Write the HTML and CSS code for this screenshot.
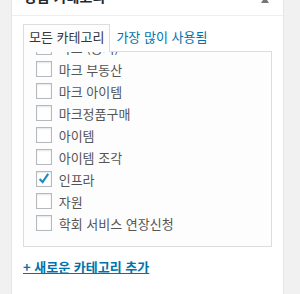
FILE: index.html
```html
<!DOCTYPE html>
<html lang="ko">
<head>
    <meta charset="UTF-8">
    <meta name="viewport" content="width=device-width, initial-scale=1.0">
    <title>상품 카테고리</title>
    <link rel="stylesheet" href="styles.css">
</head>
<body>
    <div id="product-cat" class="postbox">
        <div class="postbox-header">
            <h2 class="hndle">상품 카테고리</h2>
            <button class="handlediv" type="button" aria-label="토글">
                <svg width="20" height="20" viewBox="0 0 20 20"><path d="M6 13l4-6 4 6z" fill="#72777c"/></svg>
            </button>
        </div>
        <div class="inside">
            <ul class="category-tabs">
                <li class="tab active">모든 카테고리</li>
                <li class="tab"><a href="#">가장 많이 사용됨</a></li>
            </ul>

            <div class="tabs-panel">
                <ul class="categorychecklist">
                    <li><span class="check"></span>마크 (공지)</li>
                    <li><span class="check"></span>마크 부동산</li>
                    <li><span class="check"></span>마크 아이템</li>
                    <li><span class="check"></span>마크정품구매</li>
                    <li><span class="check"></span>아이템</li>
                    <li><span class="check"></span>아이템 조각</li>
                    <li><span class="check checked"><svg width="16" height="16" viewBox="0 0 16 16"><path d="M3.6 7.9l3 3.1 5.6-8.2" fill="none" stroke="#1e8cbe" stroke-width="2.1"/></svg></span>인프라</li>
                    <li><span class="check"></span>자원</li>
                    <li><span class="check"></span>학회 서비스 연장신청</li>
                </ul>
            </div>

            <a href="#" class="add-new">+ 새로운 카테고리 추가</a>
        </div>
    </div>
</body>
</html>
```

FILE: styles.css
```css
body {
    margin: 0;
    padding: 0;
    background-color: #f1f1f1;
    font-family: "Noto Sans CJK KR", "Noto Sans", sans-serif;
    font-size: 13px;
    color: #444;
}

.postbox {
    width: 271px;
    height: 320px;
    margin: -22px 0 0 11px;
    background: #fff;
    border: 1px solid #e5e5e5;
}

.postbox-header {
    display: flex;
    align-items: center;
    border-bottom: 1px solid #eee;
}

.hndle {
    flex: 1;
    margin: 0;
    padding: 8px 12px;
    font-size: 14px;
    line-height: 1.4;
    font-weight: 600;
    color: #23282d;
}

.handlediv {
    width: 36px;
    height: 36px;
    padding: 0;
    border: none;
    background: none;
    display: flex;
    justify-content: center;
    align-items: center;
}

.handlediv svg {
    margin-top: 5px;
}

.inside {
    padding: 8px 11px 0;
}

.category-tabs {
    display: flex;
    margin: 0;
    padding: 0;
    list-style: none;
}

.tab {
    padding: 3px 5px 5px;
    line-height: 18px;
    color: #32373c;
    border: 1px solid transparent;
    border-bottom: none;
}

.tab.active {
    border-color: #ddd;
    background: #fdfdfd;
    position: relative;
    z-index: 1;
    margin-bottom: -1px;
}

.tab a {
    color: #0073aa;
    text-decoration: none;
}

.tabs-panel {
    height: 194px;
    overflow: hidden;
    padding: 0 11.7px;
    border: 1px solid #ddd;
    background: #fdfdfd;
}

.categorychecklist {
    margin: -16px 0 0;
    padding: 0;
    list-style: none;
}

.categorychecklist li {
    display: flex;
    align-items: center;
    height: 22px;
    color: #555;
    white-space: nowrap;
}

.check {
    width: 14px;
    height: 14px;
    margin-right: 7px;
    border: 1px solid #b4b9be;
    background: #fff;
    box-shadow: inset 0 1px 2px rgba(0, 0, 0, 0.1);
    position: relative;
    flex: none;
}

.check svg {
    position: absolute;
    left: -1px;
    top: -1px;
}

.add-new {
    display: inline-block;
    margin-top: 11px;
    line-height: 18px;
    font-weight: 600;
    color: #0073aa;
    text-decoration: underline;
}
```
